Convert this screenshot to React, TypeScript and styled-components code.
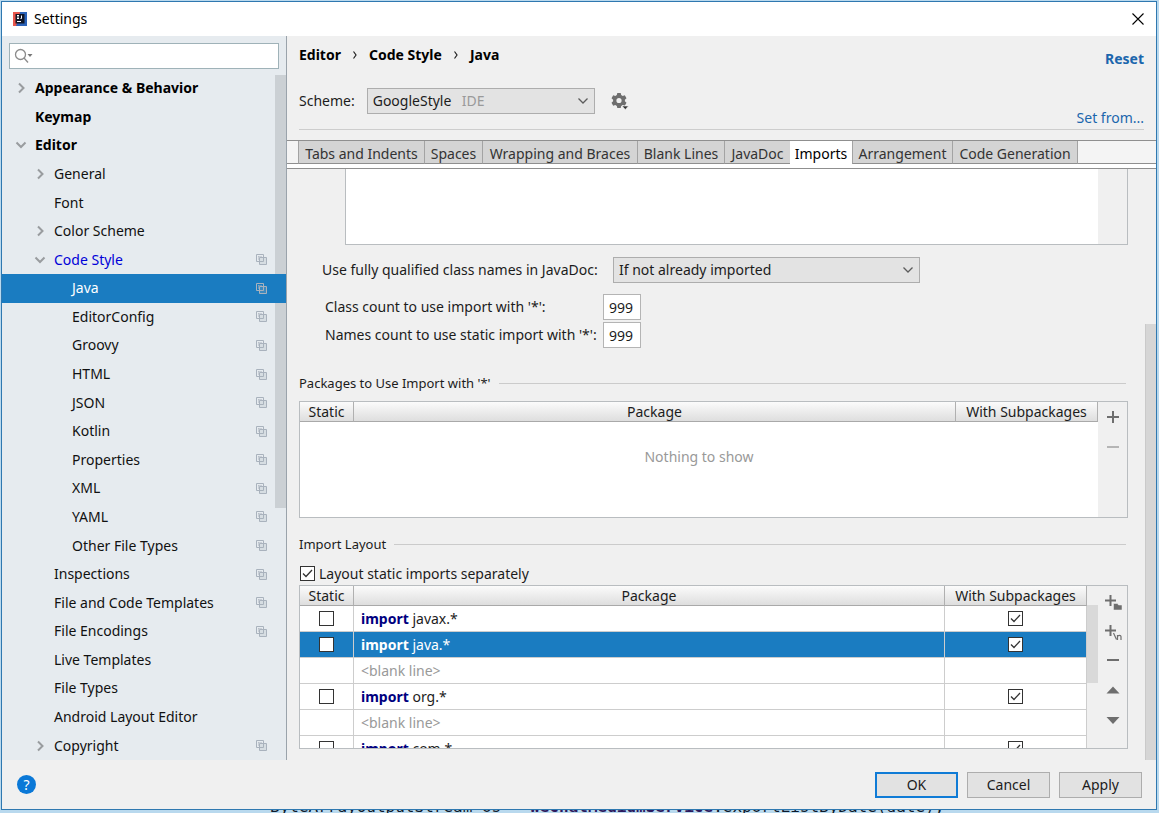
import React, { useState } from 'react';
import styled, { createGlobalStyle, css } from 'styled-components';

const ink = '#1c1c1c';
const line = '#b9bdc0';
const blue = '#1a7cc1';

const Global = createGlobalStyle`
  * { box-sizing: border-box; }
  body {
    margin: 0;
    background: #b9d9ee;
    color: ${ink};
    font: 14px/20px "Noto Sans", "Open Sans", sans-serif;
  }
  button, input, select { font: inherit; color: inherit; }
`;

const Desktop = styled.div`
  display: flex;
  flex-direction: column;
  min-height: 100vh;
  padding: 1px 2px 0 1px;
`;

const Window = styled.main`
  flex: 1;
  display: flex;
  flex-direction: column;
  border: 1px solid #2f78b0;
  background: #f0f0f0;
`;

const TitleBar = styled.header`
  display: flex;
  align-items: center;
  gap: 7px;
  height: 34px;
  padding: 0 12px 0 11px;
  background: #fff;
  color: #000;
`;

const Title = styled.h1`
  flex: 1;
  margin: 0;
  font-size: 14px;
  font-weight: 400;
`;

const PlainButton = styled.button`
  display: flex;
  align-items: center;
  justify-content: center;
  padding: 0;
  border: 0;
  background: none;
`;

const Body = styled.div`
  flex: 1;
  display: flex;
  min-height: 0;
`;

const Sidebar = styled.nav`
  display: flex;
  flex-direction: column;
  width: 285px;
  flex: none;
  background: #e6ebef;
  border-right: 1px solid #9aa3ab;
`;

const SearchBox = styled.label`
  display: flex;
  align-items: center;
  height: 26px;
  margin: 7px 7px 5px;
  padding-left: 4px;
  border: 1px solid #9fb2b8;
  background: #fff;
`;

const SearchInput = styled.input`
  flex: 1;
  min-width: 0;
  border: 0;
  outline: 0;
  background: none;
`;

const TreeArea = styled.div`
  position: relative;
  flex: 1;
  display: flex;
  flex-direction: column;
`;

const TreeThumb = styled.div`
  position: absolute;
  top: 1px;
  right: 0;
  width: 11px;
  height: 433px;
  background: #cbd0d4;
  pointer-events: none;
`;

const TreeRow = styled.button<{ $level: number; $selected?: boolean; $tone?: string }>`
  flex: 1;
  position: relative;
  z-index: ${p => (p.$selected ? 1 : 0)};
  display: flex;
  align-items: center;
  min-height: 28px;
  padding: 0 19px 0 ${p => [13, 32, 50][p.$level]}px;
  border: 0;
  background: ${p => (p.$selected ? blue : 'transparent')};
  color: ${p => (p.$selected ? '#fff' : p.$tone || '#111')};
  font-weight: ${p => (p.$tone === '#000' ? 700 : 400)};
  text-align: left;
`;

const Twisty = styled.span`
  display: flex;
  width: 20px;
  flex: none;
`;

const TreeLabel = styled.span`
  flex: 1;
`;

const Content = styled.section`
  flex: 1;
  display: flex;
  flex-direction: column;
  min-width: 0;
`;

const Heading = styled.div`
  display: flex;
  justify-content: space-between;
  margin: 0 12px;
  height: 94px;
  border-bottom: 1px solid #cdcdcd;
`;

const HeadColumn = styled.div<{ $end?: boolean }>`
  display: flex;
  flex-direction: column;
  justify-content: space-between;
  align-items: ${p => (p.$end ? 'flex-end' : 'flex-start')};
  padding: ${p => (p.$end ? '13px 0 1px' : '9px 0 15px')};
`;

const Crumbs = styled.div`
  display: flex;
  align-items: center;
  gap: 12px;
  color: #000;
  font-weight: 700;
`;

const SchemeRow = styled.div`
  display: flex;
  align-items: center;
  gap: 12px;
`;

const Link = styled.a<{ $bold?: boolean }>`
  color: #1b66ad;
  font-weight: ${p => (p.$bold ? 700 : 400)};
  text-decoration: none;
`;

const SelectFrame = styled.span<{ $width: number }>`
  position: relative;
  display: flex;
  align-items: center;
  width: ${p => p.$width}px;
  height: 26px;
  border: 1px solid #adadad;
  background: #e3e3e3;
`;

const Select = styled.select`
  appearance: none;
  width: 100%;
  height: 100%;
  padding: 0 24px 0 5px;
  border: 0;
  background: none;
  outline: 0;
`;

const SelectHint = styled.span`
  position: absolute;
  left: 94px;
  color: #9a9a9a;
  pointer-events: none;
`;

const SelectArrow = styled.span`
  position: absolute;
  right: 5px;
  display: flex;
  pointer-events: none;
`;

const TabStrip = styled.div`
  display: flex;
  height: 29px;
  margin-top: 10px;
  padding-left: 11px;
  border-top: 1px solid #8f8f8f;
  border-bottom: 1px solid #8f8f8f;
  background: linear-gradient(#f4f4f4 0 22px, #8f8f8f 22px 23px, #fff 23px);
`;

const Tab = styled.button<{ $width: number; $active?: boolean }>`
  width: ${p => p.$width}px;
  height: ${p => (p.$active ? 27 : 23)}px;
  padding: ${p => (p.$active ? '3px 0 4px' : '3px 0 0')};
  border: 0;
  border-left: ${p => (p.$active ? '0' : '1px solid #a3a3a3')};
  border-bottom: ${p => (p.$active ? '0' : '1px solid #8f8f8f')};
  background: ${p => (p.$active ? '#fff' : '#d4d4d4')};
  color: ${p => (p.$active ? '#000' : '#333')};
  line-height: 20px;
  text-align: center;
  white-space: nowrap;
  &:last-child { border-right: 1px solid #a3a3a3; }
`;

const Scroller = styled.div`
  flex: 1;
  display: flex;
`;

const Pane = styled.div`
  flex: 1;
  display: flex;
  flex-direction: column;
  min-width: 0;
  padding: 0 17px 11px 12px;
`;

const Track = styled.div`
  display: flex;
  flex-direction: column;
  justify-content: flex-end;
  width: 11px;
`;

const TrackThumb = styled.div`
  height: 436px;
  background: #d6d6d6;
  border-left: 1px solid #cacaca;
`;

const UpperList = styled.div`
  height: 76px;
  margin-left: 46px;
  border: 1px solid ${line};
  border-top: 0;
  background: #fff;
  display: flex;
  justify-content: flex-end;
`;

const ToolColumn = styled.div<{ $gap: number; $top: number }>`
  display: flex;
  flex-direction: column;
  align-items: center;
  gap: ${p => p.$gap}px;
  width: 29px;
  flex: none;
  padding-top: ${p => p.$top}px;
  background: #f0f0f0;
`;

const FieldRow = styled.div`
  display: grid;
  grid-template-columns: 291px auto;
  justify-content: start;
  align-items: center;
  margin: 12px 0 11px 23px;
`;

const CountGrid = styled.div`
  display: grid;
  grid-template-columns: 278px 38px;
  align-items: center;
  row-gap: 2px;
  margin-left: 26px;
`;

const CountInput = styled.input`
  width: 38px;
  height: 26px;
  padding: 0 5px;
  border: 1px solid #b4b4b4;
  background: #fff;
  outline: 0;
`;

const GroupTitle = styled.h2<{ $top: number }>`
  display: flex;
  align-items: center;
  gap: 8px;
  margin: ${p => p.$top}px 2px 8px 0;
  font-size: 13px;
  font-weight: 400;
  line-height: 20px;
  &::after { content: ''; flex: 1; height: 1px; background: #cbcbcb; }
`;

const GridFrame = styled.div<{ $height: number }>`
  display: flex;
  height: ${p => p.$height}px;
  border: 1px solid ${line};
  background: #fff;
`;

const GridBody = styled.div`
  flex: 1;
  min-width: 0;
  overflow: hidden;
`;

const Grid = styled.table`
  width: 100%;
  border-collapse: separate;
  border-spacing: 0;
  table-layout: fixed;
`;

const HeadCell = styled.th<{ $width?: number }>`
  width: ${p => (p.$width ? p.$width + 'px' : 'auto')};
  height: 20px;
  padding: 1px 0 0;
  border-right: 1px solid #b0b0b0;
  border-bottom: 1px solid #a9a9a9;
  background: linear-gradient(#fbfbfb, #dedede);
  font-weight: 400;
  line-height: 18px;
`;

const Row = styled.tr<{ $selected?: boolean }>`
  ${p => p.$selected && css`background: ${blue}; color: #fff;`}
`;

const Cell = styled.td<{ $center?: boolean }>`
  height: 26px;
  padding: ${p => (p.$center ? '0' : '0 0 0 7px')};
  border-right: 1px solid #cdcdcd;
  border-bottom: 1px solid #cdcdcd;
  line-height: 20px;
`;

const Keyword = styled.b<{ $selected?: boolean }>`
  color: ${p => (p.$selected ? '#fff' : '#000080')};
`;

const Muted = styled.span`
  color: #999;
`;

const Empty = styled.p`
  margin: 25px 0 0;
  color: #999;
  text-align: center;
`;

const Check = styled.input`
  appearance: none;
  display: block;
  width: 15px;
  height: 15px;
  margin: 0;
  border: 1px solid #333;
  background: #fff;
`;

const CheckFrame = styled.span`
  position: relative;
  display: block;
  width: 15px;
  height: 15px;
  margin: 0 auto;
  svg { position: absolute; inset: 0; pointer-events: none; }
`;

const CheckLabel = styled.label`
  display: flex;
  align-items: center;
  gap: 4px;
  align-self: flex-start;
  margin-left: 1px;
  line-height: 23px;
`;

const InnerTrack = styled.div`
  width: 11px;
  flex: none;
  padding-top: 19px;
  background: #f0f0f0;
`;

const InnerThumb = styled.div`
  height: 78px;
  background: #d9d9d9;
`;

const Footer = styled.footer`
  display: flex;
  align-items: center;
  gap: 9px;
  height: 49px;
  padding: 0 14px 0 15px;
  background: #f0f0f0;
`;

const Help = styled(PlainButton)`
  width: 19px;
  height: 19px;
  margin-right: auto;
  border-radius: 50%;
  background: #0a78d7;
  color: #fff;
`;

const DialogButton = styled.button<{ $primary?: boolean }>`
  width: 83px;
  height: 26px;
  padding: 0;
  border: ${p => (p.$primary ? '2px solid #0f7bd6' : '1px solid #adadad')};
  background: #e2e2e2;
`;

const CodeStrip = styled.div`
  display: flex;
  align-items: flex-end;
  height: 4px;
  padding-left: 269px;
  overflow: hidden;
  color: #0c1a2c;
  font: 16px/14px "DejaVu Sans Mono", monospace;
  white-space: pre;
  b { color: #2b1a5e; }
`;

const stroke = '#6e6e6e';

const Chevron = ({ open }: { open: boolean }) => (
  <svg width="12" height="12" viewBox="0 0 12 12" fill="none" stroke="#999c9f" strokeWidth="2">
    <path d={open ? 'M1.500 3.500l4.500 4.500 4.500-4.500' : 'M4 1.500L8.500 6 4 10.500'} />
  </svg>
);

const DropArrow = () => (
  <svg width="12" height="8" viewBox="0 0 12 8" fill="none" stroke="#5c5c5c" strokeWidth="1.3">
    <path d="M1.500 1.500L6 6l4.500-4.500" />
  </svg>
);

const CopyIcon = () => (
  <svg width="11" height="11" viewBox="0 0 11 11" fill="none" stroke="#a9b2bd">
    <path d="M.5.5h7v7h-7z" />
    <path d="M3.500 3.500h7v7h-7z" fill="#a9b2bd" fillOpacity=".25" />
    <path d="M2 2.500h4M2.500 2v4" strokeOpacity=".5" />
  </svg>
);

const CrumbArrow = () => (
  <svg width="4" height="8" viewBox="0 0 4 8" fill="none" stroke="#222" strokeWidth="1.200">
    <path d="M.5.5L3 4 .5 7.500" />
  </svg>
);

const CheckBox = ({ checked, label }: { checked: boolean; label?: string }) => {
  const [on, setOn] = useState(checked);
  return (
    <CheckFrame>
      <Check type="checkbox" aria-label={label} checked={on} onChange={() => setOn(!on)} />
      {on && (
        <svg width="15" height="15" viewBox="0 0 15 15" fill="none" stroke="#333" strokeWidth="1.300">
          <path d="M3 7.500l3 3 6-6.500" />
        </svg>
      )}
    </CheckFrame>
  );
};

type Node = { name: string; level: number; open?: boolean; copy?: boolean; tone?: string };

const tree: Node[] = [
  { name: 'Appearance & Behavior', level: 0, open: false, tone: '#000' },
  { name: 'Keymap', level: 0, tone: '#000' },
  { name: 'Editor', level: 0, open: true, tone: '#000' },
  { name: 'General', level: 1, open: false },
  { name: 'Font', level: 1 },
  { name: 'Color Scheme', level: 1, open: false },
  { name: 'Code Style', level: 1, open: true, copy: true, tone: '#0000d8' },
  ...['Java', 'EditorConfig', 'Groovy', 'HTML', 'JSON', 'Kotlin', 'Properties', 'XML', 'YAML', 'Other File Types'].map(
    name => ({ name, level: 2, copy: true }),
  ),
  { name: 'Inspections', level: 1, copy: true },
  { name: 'File and Code Templates', level: 1, copy: true },
  { name: 'File Encodings', level: 1, copy: true },
  { name: 'Live Templates', level: 1 },
  { name: 'File Types', level: 1 },
  { name: 'Android Layout Editor', level: 1 },
  { name: 'Copyright', level: 1, open: false, copy: true },
];

const tabs: [string, number][] = [
  ['Tabs and Indents', 126],
  ['Spaces', 58],
  ['Wrapping and Braces', 155],
  ['Blank Lines', 87],
  ['JavaDoc', 66],
  ['Imports', 62],
  ['Arrangement', 100],
  ['Code Generation', 126],
];

const layout = ['javax.*', 'java.*', '', 'org.*', '', 'com.*'];

export default function App() {
  const [selected, setSelected] = useState('Java');
  const [tab, setTab] = useState('Imports');
  return (
    <>
      <Global />
      <Desktop>
        <Window>
          <TitleBar>
            <svg width="14" height="14" viewBox="0 0 14 14">
              <path d="M0 0h14v14H0z" fill="#2a62b8" />
              <path d="M0 0h7l-1 6-3 8H0z" fill="#e8564c" />
              <path d="M2.500 2h9v9.500h-9z" fill="#101626" />
              <path d="M4 3.500h2M5 3.500v3M4 6.500h2M8.500 3.500v3h-1M4 9.500h4" stroke="#fff" fill="none" />
            </svg>
            <Title>Settings</Title>
            <PlainButton aria-label="Close">
              <svg width="12" height="12" viewBox="0 0 12 12" stroke="#000" strokeWidth="1.100">
                <path d="M.5.5l11 11M11.500.5l-11 11" />
              </svg>
            </PlainButton>
          </TitleBar>
          <Body>
            <Sidebar aria-label="Settings categories">
              <SearchBox>
                <svg width="20" height="16" viewBox="0 0 20 16" fill="none" stroke="#8b8b8b" strokeWidth="1.300">
                  <circle cx="6.500" cy="6.500" r="5" />
                  <path d="M10 10l4 4.500" />
                  <path d="M13.500 6h5L16 9z" fill="#777" stroke="none" />
                </svg>
                <SearchInput aria-label="Search settings" />
              </SearchBox>
              <TreeArea>
                {tree.map(n => (
                  <TreeRow
                    key={n.name}
                    $level={n.level}
                    $tone={n.tone}
                    $selected={n.name === selected}
                    onClick={() => setSelected(n.name)}
                  >
                    <Twisty>{n.open !== undefined && <Chevron open={n.open} />}</Twisty>
                    <TreeLabel>{n.name}</TreeLabel>
                    {n.copy && <CopyIcon />}
                  </TreeRow>
                ))}
                <TreeThumb />
              </TreeArea>
            </Sidebar>
            <Content>
              <Heading>
                <HeadColumn>
                  <Crumbs>
                    <span>Editor</span>
                    <CrumbArrow />
                    <span>Code Style</span>
                    <CrumbArrow />
                    <span>Java</span>
                  </Crumbs>
                  <SchemeRow>
                    <label htmlFor="scheme">Scheme:</label>
                    <SelectFrame $width={228}>
                      <Select id="scheme"><option>GoogleStyle</option></Select>
                      <SelectHint>IDE</SelectHint>
                      <SelectArrow><DropArrow /></SelectArrow>
                    </SelectFrame>
                    <PlainButton aria-label="Scheme actions">
                      <svg width="24" height="18" viewBox="-3 0 24 18">
                        <path
                          d="M7.300 1h3.400l.5 2.100 1.500.9 2.100-.7 1.700 2.900-1.600 1.500v1.600l1.600 1.500-1.700 2.900-2.100-.7-1.500.9-.5 2.100H7.300l-.5-2.100-1.500-.9-2.100.7-1.700-2.900 1.600-1.500V7.700L1.500 6.200l1.700-2.900 2.100.7 1.500-.9zM9 5.900a2.600 2.600 0 100 5.200 2.600 2.600 0 000-5.200z"
                          fill={stroke}
                          fillRule="evenodd"
                        />
                        <path d="M12 14h6.500l-3.200 3.500z" fill="#333" stroke="#f0f0f0" strokeWidth=".6" />
                      </svg>
                    </PlainButton>
                  </SchemeRow>
                </HeadColumn>
                <HeadColumn $end>
                  <Link href="#reset" $bold>Reset</Link>
                  <Link href="#set-from">Set from...</Link>
                </HeadColumn>
              </Heading>
              <TabStrip role="tablist">
                {tabs.map(([name, width]) => (
                  <Tab
                    key={name}
                    role="tab"
                    aria-selected={name === tab}
                    $width={width}
                    $active={name === tab}
                    onClick={() => setTab(name)}
                  >
                    {name}
                  </Tab>
                ))}
              </TabStrip>
              <Scroller>
                <Pane>
                  <UpperList><ToolColumn $gap={0} $top={0} /></UpperList>
                  <FieldRow>
                    <label htmlFor="javadoc">Use fully qualified class names in JavaDoc:</label>
                    <SelectFrame $width={307}>
                      <Select id="javadoc"><option>If not already imported</option></Select>
                      <SelectArrow><DropArrow /></SelectArrow>
                    </SelectFrame>
                  </FieldRow>
                  <CountGrid>
                    <label htmlFor="classes">Class count to use import with '*':</label>
                    <CountInput id="classes" defaultValue="999" />
                    <label htmlFor="names">Names count to use static import with '*':</label>
                    <CountInput id="names" defaultValue="999" />
                  </CountGrid>
                  <GroupTitle $top={25}>Packages to Use Import with '*'</GroupTitle>
                  <GridFrame $height={117}>
                    <GridBody>
                      <Grid>
                        <thead>
                          <tr>
                            <HeadCell $width={54}>Static</HeadCell>
                            <HeadCell>Package</HeadCell>
                            <HeadCell $width={142}>With Subpackages</HeadCell>
                          </tr>
                        </thead>
                      </Grid>
                      <Empty>Nothing to show</Empty>
                    </GridBody>
                    <ToolColumn $gap={18} $top={9}>
                      <PlainButton aria-label="Add package">
                        <svg width="12" height="12" viewBox="0 0 12 12" stroke={stroke} strokeWidth="2"><path d="M6 0v12M0 6h12" /></svg>
                      </PlainButton>
                      <PlainButton aria-label="Remove package">
                        <svg width="12" height="12" viewBox="0 0 12 12" stroke="#b5b5b5" strokeWidth="2"><path d="M0 6h12" /></svg>
                      </PlainButton>
                    </ToolColumn>
                  </GridFrame>
                  <GroupTitle $top={16}>Import Layout</GroupTitle>
                  <CheckLabel>
                    <CheckBox checked />
                    Layout static imports separately
                  </CheckLabel>
                  <GridFrame $height={164}>
                    <GridBody>
                      <Grid>
                        <thead>
                          <tr>
                            <HeadCell $width={54}>Static</HeadCell>
                            <HeadCell>Package</HeadCell>
                            <HeadCell $width={142}>With Subpackages</HeadCell>
                          </tr>
                        </thead>
                        <tbody>
                          {layout.map((name, i) => (
                            <Row key={i} $selected={i === 1}>
                              <Cell $center>{name && <CheckBox checked={false} label={`${name} is static`} />}</Cell>
                              <Cell>
                                {name ? <><Keyword $selected={i === 1}>import</Keyword> {name}</> : <Muted>&lt;blank line&gt;</Muted>}
                              </Cell>
                              <Cell $center>{name && <CheckBox checked label={`${name} with subpackages`} />}</Cell>
                            </Row>
                          ))}
                        </tbody>
                      </Grid>
                    </GridBody>
                    <InnerTrack><InnerThumb /></InnerTrack>
                    <ToolColumn $gap={12} $top={8}>
                      <PlainButton aria-label="Add package">
                        <svg width="18" height="18" viewBox="0 0 18 18" stroke={stroke} strokeWidth="2">
                          <path d="M6.500 1v11M1 6.500h11" />
                          <path d="M9.500 9.500h4l1 1.500H18v5H9.500z" fill={stroke} stroke="#f0f0f0" strokeWidth=".5" />
                        </svg>
                      </PlainButton>
                      <PlainButton aria-label="Add blank line">
                        <svg width="18" height="18" viewBox="0 0 18 18" fill="none" stroke={stroke} strokeWidth="2">
                          <path d="M6.500 1v11M1 6.500h11" />
                          <path d="M9.500 9l3 6.500M13.500 16v-5M13.500 12.500c.5-1.500 3.500-1.500 3.500 0V16" strokeWidth="1.200" />
                        </svg>
                      </PlainButton>
                      <PlainButton aria-label="Remove">
                        <svg width="12" height="12" viewBox="0 0 12 12" stroke={stroke} strokeWidth="2"><path d="M0 6h12" /></svg>
                      </PlainButton>
                      <PlainButton aria-label="Move up">
                        <svg width="14" height="18" viewBox="0 0 14 18"><path d="M.5 15.500l6.500-7 6.500 7z" fill={stroke} /></svg>
                      </PlainButton>
                      <PlainButton aria-label="Move down">
                        <svg width="14" height="18" viewBox="0 0 14 18"><path d="M.5 9l6.500 7 6.500-7z" fill={stroke} /></svg>
                      </PlainButton>
                    </ToolColumn>
                  </GridFrame>
                </Pane>
                <Track><TrackThumb /></Track>
              </Scroller>
            </Content>
          </Body>
          <Footer>
            <Help aria-label="Help">?</Help>
            <DialogButton $primary>OK</DialogButton>
            <DialogButton>Cancel</DialogButton>
            <DialogButton>Apply</DialogButton>
          </Footer>
        </Window>
        <CodeStrip>ByteArrayOutputStream os = <b>wechatMediumService</b>.exportListByDate(date);</CodeStrip>
      </Desktop>
    </>
  );
}
